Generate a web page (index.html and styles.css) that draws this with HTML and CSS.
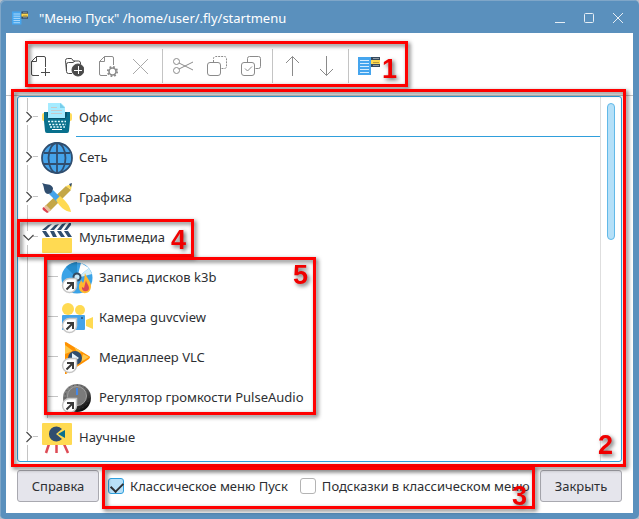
FILE: index.html
```html
<!DOCTYPE html>
<html lang="ru">
<head>
  <meta charset="UTF-8">
  <meta name="viewport" content="width=device-width, initial-scale=1.0">
  <title>Меню Пуск</title>
  <link rel="stylesheet" href="styles.css">
</head>
<body>
  <!-- shared shapes -->
  <svg class="defs" width="0" height="0" aria-hidden="true">
    <defs>
      <symbol id="menu-icon" viewBox="0 0 22 22">
        <path fill="#45a5ee" d="M0 2h13v18H0z"/>
        <path stroke="#d5edff" d="M2 5.500h9M2 8.500h9M2 11.500h9M2 14.500h9M2 17.500h9"/>
        <path fill="#34495e" d="M13 2h9v10h-9z"/>
        <path fill="#ffd94f" d="M13 5h9v4h-9z"/>
        <path stroke="#8c98a2" d="M15 3.500h6M15 10.500h6"/>
        <path stroke="#b79b3b" d="M15 7.500h6"/>
      </symbol>
      <symbol id="closed" viewBox="0 0 13 40">
        <path stroke="#c4c4c4" d="M1.500 0v13M1.500 27v13M7 18.500h5"/>
        <path fill="none" stroke="#4a4a4a" stroke-width="1.200" d="M0.500 14l5 5-5 5"/>
      </symbol>
      <symbol id="open" viewBox="0 0 13 40">
        <path stroke="#c4c4c4" d="M1.500 0v13M1.500 27v13M7 18.500h5"/>
      </symbol>
      <symbol id="guide" viewBox="0 0 13 40">
        <path stroke="#c4c4c4" d="M1.500 0v40"/>
      </symbol>
      <symbol id="branch" viewBox="0 0 13 40">
        <path stroke="#c4c4c4" d="M1.500 0v40M2 18.500h10"/>
      </symbol>
      <symbol id="shortcut" viewBox="0 0 32 32">
        <path fill="#fff" stroke="#c6c6c6" stroke-width="1.500" d="M8.500 16.500h7v7.500a7 7 0 1 1-7-7.500z"/>
        <path fill="none" stroke="#3b3b3b" stroke-width="2" d="M5.500 27.500l6-6M6 21h6v6"/>
      </symbol>
    </defs>
  </svg>

  <div class="window">
    <header class="titlebar">
      <svg class="app-icon" width="16" height="16"><use href="#menu-icon"/></svg>
      <h1>"Меню Пуск" /home/user/.fly/startmenu</h1>
      <div class="window-buttons">
        <button type="button" aria-label="Свернуть"><svg width="12" height="12"><path d="M1 10.500h10"/></svg></button>
        <button type="button" aria-label="Развернуть"><svg width="12" height="12"><rect x="1.500" y="1.500" width="9" height="9" rx="1"/></svg></button>
        <button type="button" aria-label="Закрыть окно"><svg width="12" height="12"><path d="M1 1l10 10M11 1L1 11"/></svg></button>
      </div>
    </header>

    <main class="content">
      <div class="toolbar">
        <button type="button" class="dark" aria-label="Новый файл">
          <svg width="22" height="22"><path d="M11 20.500H5a1.500 1.500 0 0 1-1.500-1.500V6.500l5-5H16a1.500 1.500 0 0 1 1.500 1.500V12M3.500 6.500h5v-5M17.500 13v8M13 17.500h9"/></svg>
        </button>
        <button type="button" class="dark" aria-label="Новая папка">
          <svg width="22" height="22"><path d="M10 18.500H6.500a2 2 0 0 1-2-2L3.500 5.500a2 2 0 0 1 2-2h4l2 2.500h5a2 2 0 0 1 2 2v1M4.500 16V9.500a2 2 0 0 1 2-2h4.500l2-1.500"/><circle cx="16" cy="15" r="6" class="filled"/><path d="M12 15.500h8M16.500 11v8" class="plus"/></svg>
        </button>
        <button type="button" aria-label="Свойства">
          <svg width="22" height="22"><path d="M11 20.500H5a1.500 1.500 0 0 1-1.500-1.500V6.500l5-5H16a1.500 1.500 0 0 1 1.500 1.500V10M3.500 6.500h5v-5"/><circle cx="16.500" cy="16.500" r="3.500" stroke-width="1.600"/><circle cx="16.500" cy="16.500" r="4.700" stroke-width="1.800" stroke-dasharray="1.800 1.900"/></svg>
        </button>
        <button type="button" class="pale" aria-label="Удалить">
          <svg width="22" height="22"><path d="M3 4l15 15M18 4L3 19"/></svg>
        </button>
        <span class="separator"></span>
        <button type="button" aria-label="Вырезать">
          <svg width="22" height="22"><circle cx="4.500" cy="6.500" r="3"/><circle cx="4.500" cy="15.500" r="3"/><path d="M7 8l14 7M7 14l14-7"/></svg>
        </button>
        <button type="button" aria-label="Копировать">
          <svg width="22" height="22"><rect x="1.500" y="7.500" width="13" height="13" rx="2.500"/><path stroke-dasharray="2 1" d="M7.500 7V3.500a2 2 0 0 1 2-2h9a2 2 0 0 1 2 2v8a2 2 0 0 1-2 2h-3"/></svg>
        </button>
        <button type="button" aria-label="Вставить">
          <svg width="22" height="22"><rect x="1.500" y="7.500" width="13" height="13" rx="2.500"/><path d="M7.500 7V3.500a2 2 0 0 1 2-2h9a2 2 0 0 1 2 2v8a2 2 0 0 1-2 2h-3M5 13.500l2.500 2.500 4.500-4.500"/></svg>
        </button>
        <span class="separator"></span>
        <button type="button" aria-label="Вверх">
          <svg width="22" height="22"><path d="M10.500 21V1.500M4 8l6.500-6.500L17 8"/></svg>
        </button>
        <button type="button" aria-label="Вниз">
          <svg width="22" height="22"><path d="M10.500 1v19.500M4 14l6.500 6.500L17 14"/></svg>
        </button>
        <span class="separator"></span>
        <button type="button" aria-label="Меню Пуск">
          <svg width="22" height="22" class="color"><use href="#menu-icon"/></svg>
        </button>
      </div>

      <div class="tree-box">
        <ul class="tree">
          <li class="row current">
            <svg class="twig" width="13" height="40"><use href="#closed"/></svg>
            <svg width="32" height="32">
              <rect x="1" y="11" width="30" height="8" rx="2" fill="#ffdb5c"/>
              <path fill="#08708d" d="M3 10h26v9l-1 10a2 2 0 0 1-2 2H6a2 2 0 0 1-2-2L3 19z"/>
              <path fill="#08546b" d="M6 10h20v4l-2 3H8l-2-3z"/>
              <path fill="#a5ebff" d="M7 1h13l4 4v11H7z"/><path fill="#78cdea" d="M19 1l5 5h-5z"/>
              <path stroke="#c5c9ca" d="M10 5.500h6M10 8.500h11M10 11.500h11"/>
              <path stroke="#e2fbff" stroke-width="1.500" stroke-dasharray="2 1.300" d="M7 19.500h18M8 22.500h17M9 25h15"/>
              <path stroke="#fff" d="M11 27.500h10"/>
            </svg>
            <span class="name">Офис</span>
          </li>
          <li class="row">
            <svg class="twig" width="13" height="40"><use href="#closed"/></svg>
            <svg width="32" height="32" fill="none" stroke="#304e6f" stroke-width="1.800">
              <circle cx="16" cy="16" r="15" fill="#45a3ea"/>
              <path d="M16 1v30M3 11h26M3 22h26"/><ellipse cx="16" cy="16" rx="8.500" ry="15"/>
            </svg>
            <span class="name">Сеть</span>
          </li>
          <li class="row">
            <svg class="twig" width="13" height="40"><use href="#closed"/></svg>
            <svg width="32" height="32">
              <path fill="#c4a747" d="M4 24L25 4l5 4L9 29z"/><path fill="#ffda52" d="M25 4l6-2-1 6z"/>
              <path fill="#324e6e" d="M28 2l3-1-1 4z"/>
              <path fill="#dc4450" d="M3 25l5 5-2 1-4-3a2 2 0 0 1 1-3z"/><path fill="#e7c19b" d="M5 23l5 5-2 2-5-5z"/>
              <path fill="#45a3ea" d="M8 12l4-4 8 8-4 4z"/><path fill="#ffda52" d="M15 18l4-4c6 5 10 10 11 16-7-1-11-5-15-12z"/>
              <path fill="#304e6f" d="M1 1c4 2 9 0 11 5 0 3-2 6-5 6-5-1-3-7-6-11z"/>
            </svg>
            <span class="name">Графика</span>
          </li>
          <li>
            <div class="row">
              <svg class="twig" width="13" height="40"><use href="#open"/><path fill="none" stroke="#4a4a4a" stroke-width="1.200" d="M-2.500 17l5 5 5-5"/></svg>
              <svg width="32" height="32">
                <rect x="1" y="16" width="30" height="15" rx="1" fill="#ffda52"/>
                <path fill="#304e6f" d="M7 3l4-1-6 6H1zM14 3l4-1-5 6H9zM21 2l4-1-5 7h-4zM28 1h2v2l-4 5h-3zM1 9h4l4 6H5zM9 9h4l3 6h-4zM16 9h4l4 6h-4zM23 9h4l4 6h-4z"/>
              </svg>
              <span class="name">Мультимедиа</span>
            </div>
            <ul class="subtree">
              <li class="row">
                <svg class="twig" width="13" height="40"><use href="#guide"/></svg>
                <svg class="twig" width="13" height="40"><use href="#branch"/></svg>
                <svg width="32" height="32">
                  <circle cx="16" cy="16" r="15.500" fill="#3ba3e7"/><path fill="#258ccb" d="M16 16L5 5a16 16 0 0 1 11-5z"/>
                  <path fill="#fff" d="M16 16l4-15 8 5z"/><path fill="#d2edf9" d="M16 16L28 6l3 6z"/>
                  <circle cx="16" cy="15" r="3.500" fill="#c7e9fa" stroke="#34495e" stroke-width="2"/>
                  <path fill="#ffb92f" d="M24 11c1 4 6 8 6 13 0 10-13 9-12 0 0-3 2-4 2-6l2 3c2-3 1-6 2-10z"/>
                  <path fill="#dc4655" d="M25 18c0 3 3 5 3 8 0 5-8 4-7-1l2 1z"/>
                  <use href="#shortcut"/>
                </svg>
                <span class="name">Запись дисков k3b</span>
              </li>
              <li class="row">
                <svg class="twig" width="13" height="40"><use href="#guide"/></svg>
                <svg class="twig" width="13" height="40"><use href="#branch"/></svg>
                <svg width="32" height="32">
                  <circle cx="7" cy="7" r="6" fill="#ffda52"/><circle cx="19" cy="8" r="5" fill="#ffda52"/>
                  <rect x="1" y="13" width="23" height="15" rx="1" fill="#45a3ea"/>
                  <path fill="#ffda52" d="M25 18l7-3v12l-7-3z"/><circle cx="21" cy="16" r="1" fill="#304e6f"/>
                  <use href="#shortcut"/>
                </svg>
                <span class="name">Камера guvcview</span>
              </li>
              <li class="row">
                <svg class="twig" width="13" height="40"><use href="#guide"/></svg>
                <svg class="twig" width="13" height="40"><use href="#branch"/></svg>
                <svg width="32" height="32">
                  <path fill="#ff9100" d="M4 1.500Q3 0 5 0l23 14q2 1 0 3L5 32H4z"/>
                  <path fill="#ffc84b" d="M4 12V3l8 6zM13 5l8 5-4 1zM20 20l8-5-6-3z"/>
                  <circle cx="14" cy="16" r="7" fill="#304e6f"/><path fill="#e7f5ff" d="M11 11l7 5-7 5z"/>
                  <use href="#shortcut"/>
                </svg>
                <span class="name">Медиаплеер VLC</span>
              </li>
              <li class="row">
                <svg class="twig" width="13" height="40"><use href="#guide"/></svg>
                <svg class="twig" width="13" height="40"><use href="#branch"/></svg>
                <svg width="32" height="32">
                  <defs><linearGradient id="knob" x1="0" y1="0" x2="0.700" y2="1"><stop offset="0" stop-color="#999"/><stop offset="0.500" stop-color="#666"/><stop offset="1" stop-color="#050505"/></linearGradient></defs>
                  <circle cx="16" cy="16" r="14" fill="url(#knob)"/>
                  <circle cx="16" cy="15" r="12" fill="none" stroke="#444" stroke-dasharray="1 3"/>
                  <circle cx="16" cy="14" r="9.500" fill="#7b7b7b" stroke="#a0a0a0"/>
                  <path stroke="#4387e8" stroke-width="2" d="M16 6v7"/>
                  <use href="#shortcut"/>
                </svg>
                <span class="name">Регулятор громкости PulseAudio</span>
              </li>
            </ul>
          </li>
          <li class="row">
            <svg class="twig" width="13" height="40"><use href="#closed"/></svg>
            <svg width="32" height="32">
              <path stroke="#de4b55" stroke-width="2.500" d="M8 22l-3 9M15.500 22v9M23 22l4 9"/>
              <rect x="1" y="1" width="30" height="22" rx="1" fill="#ffda52"/>
              <path fill="#304e6f" d="M15 12l6 5a7.500 7.500 0 1 1 0-10z"/><path fill="#08708d" d="M17 12l7-4v8z"/>
            </svg>
            <span class="name">Научные</span>
          </li>
        </ul>
        <div class="scrollbar"><div class="thumb"></div></div>
      </div>

      <footer class="footer">
        <button type="button" class="push">Справка</button>
        <label><input type="checkbox" checked>Классическое меню Пуск</label>
        <label><input type="checkbox">Подсказки в классическом меню</label>
        <button type="button" class="push close">Закрыть</button>
      </footer>
    </main>

    <!-- numbered callouts over the window -->
    <div class="callout c1"><b>1</b></div>
    <div class="callout c2"><b>2</b></div>
    <div class="callout c3"><b>3</b></div>
    <div class="callout c4"><b>4</b></div>
    <div class="callout c5"><b>5</b></div>
  </div>
</body>
</html>
```
FILE: styles.css
```css
* {
  box-sizing: border-box;
}
body {
  margin: 0;
  background: #b4c0cc;
  font-family: "Noto Sans", sans-serif;
  font-size: 13px;
  color: #2d2f33;
}
.defs {
  position: absolute;
}
button {
  padding: 0;
  border: 0;
  background: none;
  font: inherit;
  color: inherit;
}
svg {
  display: block;
  flex: none;
}
ul {
  margin: 0;
  padding: 0;
  list-style: none;
}

.window {
  position: relative;
  display: flex;
  flex-direction: column;
  height: 100vh;
  padding: 1px 6px 6px;
  background: #5a90bd;
  border-radius: 5px;
  box-shadow: inset 1px 1px #7fa6c8;
}
.titlebar {
  display: flex;
  align-items: center;
  height: 32px;
  padding: 2px 9px 0 6px;
  color: #fff;
}
.titlebar h1 {
  flex: 1;
  margin: 0 0 0 11px;
  font-size: 13px;
  font-weight: 400;
}
.window-buttons {
  display: flex;
  gap: 17px;
}
.window-buttons svg {
  fill: none;
  stroke: #e6eef5;
}

.content {
  display: flex;
  flex: 1;
  flex-direction: column;
  min-height: 0;
  background: #fff;
}
.toolbar {
  display: flex;
  align-items: center;
  height: 63px;
  padding: 3px 16px 0;
  border-bottom: 1px solid #c4c4c4;
}
.toolbar button {
  padding: 6px;
}
.toolbar svg {
  fill: none;
  stroke: #8b8b8b;
}
.toolbar .color {
  stroke: none;
}
.toolbar .dark svg {
  stroke: #4a4a4a;
}
.toolbar .pale svg {
  stroke: #a9a9a9;
}
.toolbar .filled {
  fill: #4a4a4a;
}
.toolbar .plus {
  stroke: #fff;
}
.separator {
  width: 1px;
  height: 34px;
  margin: 0 3px 0 4px;
  background: #c4c4c4;
}

.tree-box {
  display: flex;
  flex: 1;
  min-height: 0;
  margin: 0 11px;
  border: 1px solid #2f9fdc;
  border-radius: 3px;
  overflow: hidden;
}
.tree {
  flex: 1;
  padding-top: 1px;
}
.tree::after {
  content: "";
  display: block;
  height: 8px;
  margin-left: 9px;
  border-left: 1px solid #c4c4c4;
}
.row {
  display: flex;
  align-items: center;
  height: 40px;
  padding-left: 8px;
}
.twig {
  margin-right: 2px;
  overflow: visible;
}
.subtree .twig + .twig {
  margin-left: 5px;
}
.name {
  flex: 1;
  align-self: flex-start;
  margin-left: 3px;
  padding-left: 3px;
  line-height: 38px;
  border-bottom: 1px solid transparent;
}
.current .name {
  border-color: #2f9fdc;
}
.scrollbar {
  width: 21px;
  padding: 6px;
  border-left: 1px solid #dedede;
}
.thumb {
  width: 8px;
  height: 137px;
  background: #b5e0f8;
  border: 1px solid #62b9e8;
  border-radius: 4px;
}

.footer {
  display: flex;
  align-items: center;
  padding: 8px 11px 11px;
  white-space: nowrap;
}
.push {
  width: 82px;
  height: 32px;
  background: #e5e5ec;
  border: 1px solid #a9a9b0;
  border-radius: 3px;
}
.close {
  margin-left: auto;
}
.footer label {
  display: flex;
  align-items: center;
  gap: 6px;
  margin-left: 9px;
}
.footer label + label {
  margin-left: 12px;
}
.footer input {
  appearance: none;
  width: 16px;
  height: 16px;
  margin: 0;
  background: #fff;
  border: 1px solid #b4b4b4;
  border-radius: 3px;
}
.footer input:checked {
  background: #b8e0f8;
  border-color: #2f9fdc;
}
.footer input:checked::before {
  content: "";
  display: block;
  width: 10px;
  height: 6px;
  margin: 3px 0 0 2px;
  border: solid #2d2f33;
  border-width: 0 0 2px 2px;
  transform: rotate(-45deg);
}

.callout {
  position: absolute;
  border: 3px solid #f00;
  filter: drop-shadow(2px 2px 2px rgba(0, 0, 0, 0.6));
  pointer-events: none;
}
.callout b {
  position: absolute;
  font: bold 27px/27px "Liberation Sans", sans-serif;
  color: #f00000;
}
.c1 {
  left: 25px;
  top: 41px;
  width: 383px;
  height: 46px;
}
.c1 b {
  right: 8px;
  bottom: 1px;
}
.c2 {
  left: 11px;
  top: 89px;
  width: 615px;
  height: 378px;
}
.c2 b {
  right: 10px;
  bottom: 5px;
}
.c3 {
  left: 102px;
  top: 467px;
  width: 433px;
  height: 42px;
}
.c3 b {
  right: 5px;
  bottom: -4px;
}
.c4 {
  left: 17px;
  top: 219px;
  width: 177px;
  height: 38px;
}
.c4 b {
  right: 5px;
  bottom: 0;
}
.c5 {
  left: 44px;
  top: 257px;
  width: 272px;
  height: 158px;
}
.c5 b {
  right: 5px;
  top: 2px;
}
```
